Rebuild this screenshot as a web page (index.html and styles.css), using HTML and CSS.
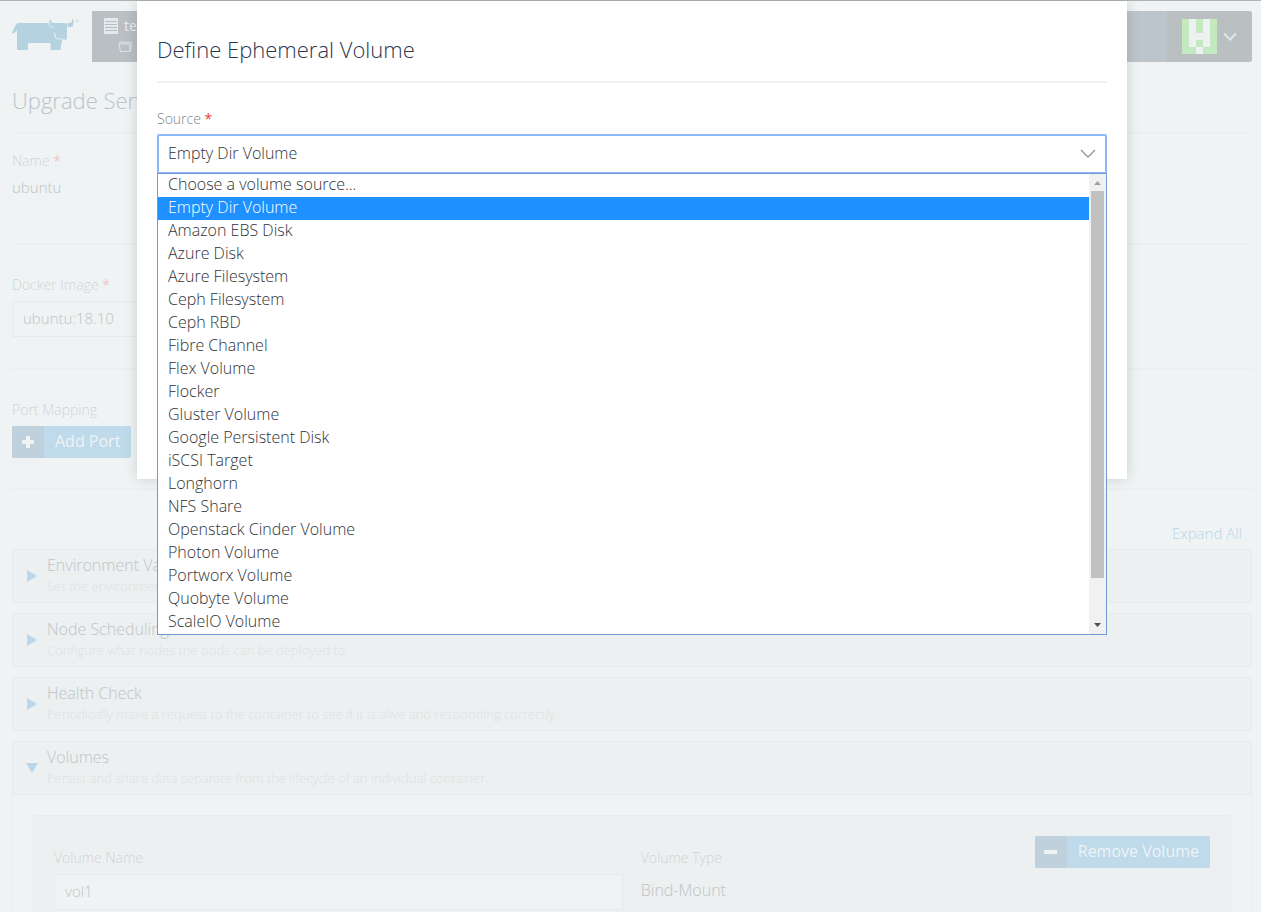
FILE: index.html
```html
<!DOCTYPE html>
<html lang="en">
<head>
<meta charset="utf-8">
<title>Upgrade Service</title>
<link rel="stylesheet" href="styles.css">
</head>
<body>
<div class="page">
  <header class="header">
    <a class="logo" href="#" aria-label="Rancher">
      <svg width="68" height="34" viewBox="0 0 68 34">
        <g fill="#b4d2df">
          <path d="M6 5h30.500q.8 4 5.500 4h9.500q.5 6.500-3 7.500l.5 4.500h1v3.500q0 2-2 2h1v4q0 1.500-1.500 1.500h-7.500q-1.500 0-1.500-1.500v-5.500h-12.500q-10 0-10 0v5.500q0 1.500-1.500 1.500h-8q-1.500 0-1.500-1.500v-18.500l-2.500 3q-1.500 1-2.500-.5l4-8q.5-1 1.500-1z"/>
          <path d="M37.500 2q1-1.500 1.500.5.200 2.500 3 2.500h10.500q3 0 2.500 3v12q0 2-2 2h-7q-2-1-1.500-4 .3-3-2-4-5.500-1-5.500-6z"/>
          <path d="M61.500 1.500q-1.500-.5-1.500 1 0 2.500-3 2.500h-1.500v4h2.500q3.500 0 3.500-4.500z"/>
        </g>
        <path d="M42.500 14.500q.5 6.500 3.500 6.500h7" fill="none" stroke="#e4edf0" stroke-width="1.200"/>
        <path d="M36.500 4q.5 5.500 6 5.500" fill="none" stroke="#e4edf0" stroke-width="1"/>
        <circle cx="65" cy="3" r="1.200" fill="none" stroke="#d3e2e9"/>
      </svg>
    </a>
    <nav class="nav">
      <a class="cluster" href="#">
        <span class="cluster-row">
          <svg width="14" height="16" viewBox="0 0 14 16"><path d="M0 0h14v16H0z" fill="#e4e9eb"/><path d="M1 3.500h12M1 6.500h12M1 9.500h12M1 12.500h12" stroke="#b6bdc1"/></svg>
          <span>test</span>
        </span>
        <span class="cluster-row project">
          <svg width="15" height="13" viewBox="0 0 15 13"><path d="M2.500 11.500L1 4h10.500l.5 7.500zM2 4V2h4l1 1.500M7 2.500h6.500L12.500 11.500" fill="none" stroke="#dfe4e6" stroke-linejoin="round"/></svg>
        </span>
      </a>
      <button class="user" type="button" aria-label="Account">
        <svg width="35" height="35" viewBox="0 0 5 5" shape-rendering="crispEdges"><path fill="#c2eabe" d="M0 0h5v5H0z"/><path fill="#eef1f2" d="M1 0h1v2h1V0h1v4H3V3H2v1H1zM2 4h1v1H2z"/></svg>
        <svg width="14" height="10" viewBox="0 0 14 10"><path d="M1 1.500L7 7.500l6-6" fill="none" stroke="#e0e4e6" stroke-width="2.200"/></svg>
      </button>
    </nav>
  </header>

  <main>
    <h1 class="title">Upgrade Service</h1>
    <section class="section name">
      <div class="label">Name <b>*</b></div>
      <div class="value small">ubuntu</div>
    </section>
    <section class="section image">
      <label class="label" for="image">Docker Image <b>*</b></label>
      <input class="input" id="image" value="ubuntu:18.10">
    </section>
    <section class="section ports">
      <div class="label">Port Mapping</div>
      <button class="btn" type="button">
        <span class="btn-icon"><svg width="12" height="12" viewBox="0 0 12 12"><path d="M6 0v12M0 6h12" stroke="#eff3f4" stroke-width="4"/></svg></span>
        <span class="btn-text">Add Port</span>
      </button>
    </section>
    <div class="expand"><a href="#">Expand All</a></div>
    <div class="panels">
      <button class="panel" type="button">
        <svg width="12" height="12" viewBox="0 0 12 12"><path d="M1 0l10 6-10 6z" fill="#bad6e8"/></svg>
        <span class="panel-text"><span class="panel-title">Environment Variables</span><span class="panel-sub">Set the environment</span></span>
      </button>
      <button class="panel" type="button">
        <svg width="12" height="12" viewBox="0 0 12 12"><path d="M1 0l10 6-10 6z" fill="#bad6e8"/></svg>
        <span class="panel-text"><span class="panel-title">Node Scheduling</span><span class="panel-sub">Configure what nodes the pods can be deployed to.</span></span>
      </button>
      <button class="panel" type="button">
        <svg width="12" height="12" viewBox="0 0 12 12"><path d="M1 0l10 6-10 6z" fill="#bad6e8"/></svg>
        <span class="panel-text"><span class="panel-title">Health Check</span><span class="panel-sub">Periodically make a request to the container to see if it is alive and responding correctly</span></span>
      </button>
      <div class="open">
        <button class="panel" type="button" aria-expanded="true">
          <svg width="12" height="12" viewBox="0 0 12 12"><path d="M0 1h12l-6 10z" fill="#bad6e8"/></svg>
          <span class="panel-text"><span class="panel-title">Volumes</span><span class="panel-sub">Persist and share data separate from the lifecycle of an individual container.</span></span>
        </button>
        <div class="panel-body">
          <div class="volume">
            <div class="field">
              <label class="label" for="volname">Volume Name</label>
              <input class="input" id="volname" value="vol1">
            </div>
            <div class="field type">
              <div class="label">Volume Type</div>
              <div class="value">Bind-Mount</div>
            </div>
            <button class="btn" type="button">
              <span class="btn-icon"><svg width="13" height="12" viewBox="0 0 13 12"><path d="M0 6h13" stroke="#eff3f4" stroke-width="4"/></svg></span>
              <span class="btn-text">Remove Volume</span>
            </button>
          </div>
        </div>
      </div>
    </div>
  </main>
</div>

<div class="overlay">
  <div class="modal" role="dialog" aria-labelledby="dialog-title">
    <h2 class="modal-title" id="dialog-title">Define Ephemeral Volume</h2>
    <label class="modal-label" for="source">Source <b>*</b></label>
    <div class="picker">
      <select class="select" id="source"><option>Empty Dir Volume</option></select>
      <svg class="caret" width="16" height="10" viewBox="0 0 16 10"><path d="M1 1l7 7 7-7" fill="none" stroke="#8f9699" stroke-width="1.300"/></svg>
      <div class="menu">
        <ul class="options" role="listbox" aria-label="Source">
          <li role="option">Choose a volume source...</li>
          <li role="option" class="selected" aria-selected="true">Empty Dir Volume</li>
          <li role="option">Amazon EBS Disk</li>
          <li role="option">Azure Disk</li>
          <li role="option">Azure Filesystem</li>
          <li role="option">Ceph Filesystem</li>
          <li role="option">Ceph RBD</li>
          <li role="option">Fibre Channel</li>
          <li role="option">Flex Volume</li>
          <li role="option">Flocker</li>
          <li role="option">Gluster Volume</li>
          <li role="option">Google Persistent Disk</li>
          <li role="option">iSCSI Target</li>
          <li role="option">Longhorn</li>
          <li role="option">NFS Share</li>
          <li role="option">Openstack Cinder Volume</li>
          <li role="option">Photon Volume</li>
          <li role="option">Portworx Volume</li>
          <li role="option">Quobyte Volume</li>
          <li role="option">ScaleIO Volume</li>
        </ul>
        <div class="scrollbar">
          <svg width="7" height="17" viewBox="0 0 7 17"><path d="M0 11l3.500-4L7 11z" fill="#a0a0a0"/></svg>
          <div class="thumb"></div>
          <svg width="7" height="17" viewBox="0 0 7 17"><path d="M0 6h7l-3.500 4z" fill="#505050"/></svg>
        </div>
      </div>
    </div>
  </div>
</div>
</body>
</html>
```
FILE: styles.css
```css
* { box-sizing: border-box; }

body {
  margin: 0;
  height: 100vh;
  overflow: hidden;
  background: #eff3f4;
  color: #c0c4c6;
  font: 300 16px/24px "Open Sans", "Noto Sans", sans-serif;
}

button, input, select { font: inherit; color: inherit; margin: 0; }
button { border: 0; padding: 0; text-align: left; }
a { color: inherit; text-decoration: none; }
h1, h2, ul { margin: 0; padding: 0; font-weight: 300; }
b { font-weight: 400; color: #f0c6c8; }

.page { padding: 10px 9px 0 12px; border-top: 1px solid #b1b3b5; }

.header { display: flex; height: 51px; }
.logo { width: 80px; padding-top: 7px; }
.nav {
  flex: 1;
  display: flex;
  justify-content: space-between;
  background: #bdc5cc;
  border-radius: 0 3px 3px 0;
  overflow: hidden;
}
.cluster {
  width: 120px;
  padding: 4px 12px;
  background: #b9bfc3;
  color: #eaeef0;
  font-weight: 400;
  font-size: 14px;
  line-height: 22px;
}
.cluster-row { display: flex; align-items: center; gap: 6px; }
.project { height: 18px; padding-left: 14px; }
.user {
  display: flex;
  align-items: center;
  gap: 6px;
  width: 85px;
  padding-left: 15px;
  background: #babfc2;
}

.title {
  height: 72px;
  padding-top: 22px;
  border-bottom: 2px solid #ebeff0;
  font-size: 22px;
  line-height: 32px;
  color: #bcc3ca;
}
.section { border-bottom: 2px solid #ebeff0; }
.name { height: 111px; padding-top: 15px; }
.image { height: 125px; padding-top: 28px; }
.ports { height: 120px; padding-top: 28px; }
.label { display: block; font-size: 14px; line-height: 24px; color: #cfd4d5; }
.value { line-height: 28px; }
.small { font-size: 15px; }
.input {
  display: block;
  width: 100%;
  height: 36px;
  padding: 0 10px 2px;
  border: 1px solid #e6eaeb;
  background: #eff3f4;
  font-size: 15px;
  outline: 0;
}
.image .input { width: 49%; margin-top: 4px; }
.ports .btn { margin-top: 4px; }

.btn {
  display: flex;
  height: 32px;
  border-radius: 2px;
  background: #bedaeb;
  color: #eff3f4;
  line-height: 31px;
  font-weight: 400;
  overflow: hidden;
}
.btn-icon {
  display: flex;
  align-items: center;
  justify-content: center;
  width: 32px;
  background: #bed1dc;
}
.btn-text { padding: 0 11px; }

.expand {
  height: 59px;
  padding: 31px 10px 0 0;
  text-align: right;
  font-size: 15px;
  color: #b6d5e8;
}
.panels { display: flex; flex-direction: column; gap: 10px; }
.panel {
  display: flex;
  align-items: center;
  gap: 9px;
  width: 100%;
  height: 54px;
  padding: 0 13px;
  border: 1px solid #e8eced;
  background: #ecf0f1;
}
.panel-text { display: flex; flex-direction: column; padding-bottom: 2px; }
.panel-title { line-height: 22px; }
.panel-sub { line-height: 20px; font-size: 13px; color: #dde1e2; }
.panel-body { padding: 20px; border: solid #ebeff0; border-width: 0 1px; }
.volume {
  display: flex;
  align-items: flex-start;
  gap: 18px;
  height: 160px;
  padding: 20px;
  border: 1px solid #e8eced;
  background: #ecf0f1;
}
.field { flex: 1; padding-top: 10px; }
.field .input { margin-top: 4px; }
.field.type { flex: 0 1 376px; }
.field .value { margin-top: 6px; }

.overlay { position: absolute; top: 1px; left: 0; right: 0; padding: 0 134px 0 137px; }
.modal {
  height: 478px;
  padding: 32px 20px 0;
  background: #fff;
  box-shadow: 0 0 12px rgba(0, 0, 0, .15);
  color: #303236;
}
.modal-title {
  height: 50px;
  border-bottom: 2px solid #ecf0f1;
  font-size: 22px;
  line-height: 32px;
  color: #2c3850;
}
.modal-label {
  display: block;
  padding-top: 23px;
  font-size: 14px;
  line-height: 26px;
  color: #80878c;
}
.modal-label b { color: #f04040; }
.picker { position: relative; margin-top: 2px; }
.select {
  display: block;
  width: 100%;
  height: 40px;
  padding: 0 9px 2px;
  appearance: none;
  border: 2px solid #8fb8f8;
  border-radius: 2px;
  background: #fff;
  outline: 0;
}
.caret { position: absolute; right: 11px; top: 15px; pointer-events: none; }
.menu {
  position: absolute;
  top: 39px;
  left: 0;
  right: 0;
  display: flex;
  border: 1px solid #7398d6;
  background: #fff;
}
.options { flex: 1; list-style: none; line-height: 21px; }
.options li { padding: 0 0 2px 10px; }
.options .selected { background: #1e90ff; color: #fff; }
.scrollbar {
  display: flex;
  flex-direction: column;
  align-items: center;
  width: 17px;
  background: #f1f1f1;
}
.thumb { flex: 0 0 387px; width: 13px; margin-bottom: auto; background: #c1c1c1; }
```
